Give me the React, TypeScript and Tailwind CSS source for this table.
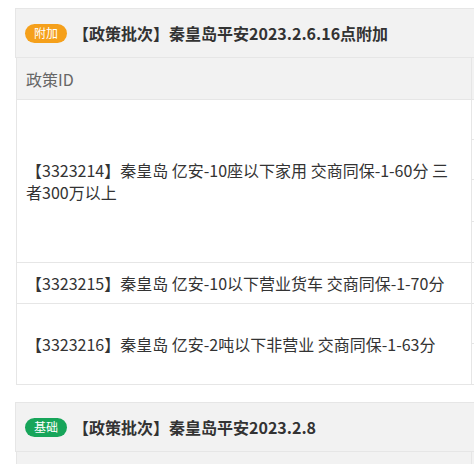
const batches = [
  {
    tag: "附加",
    tagClass: "bg-[#f5a01b]",
    title: "【政策批次】秦皇岛平安2023.2.6.16点附加",
    rows: [
      { text: "【3323214】秦皇岛 亿安-10座以下家用 交商同保-1-60分 三者300万以上", subs: [40, 40, 42, 40] },
      { text: "【3323215】秦皇岛 亿安-10以下营业货车 交商同保-1-70分", subs: [40] },
      { text: "【3323216】秦皇岛 亿安-2吨以下非营业 交商同保-1-63分", subs: [40, 40] },
    ],
  },
  {
    tag: "基础",
    tagClass: "bg-[#17a55a]",
    title: "【政策批次】秦皇岛平安2023.2.8",
    rows: [{ text: "【3323201】秦皇岛 平安-6座以下家用 交商同保-1-60分", subs: [40, 40] }],
  },
];

type Batch = (typeof batches)[number];

const BatchCard = ({ batch }: { batch: Batch }) => (
  <div className="w-[760px]">
    <div className="flex h-[50px] items-center border border-[#e6e6e6] bg-[#f2f2f2] pl-[9px]">
      <span
        className={`flex h-[19px] w-[42px] items-center justify-center rounded-full text-[12px] leading-none text-white ${batch.tagClass}`}
      >
        {batch.tag}
      </span>
      <span className="ml-[6px] text-[16px] font-bold text-[#333]">{batch.title}</span>
    </div>
    <div className="ml-px border-b border-l border-[#e6e6e6]">
      <div className="flex h-[42px] border-b border-[#e6e6e6] bg-[#f2f2f2]">
        <div className="flex w-[455px] items-center border-r border-[#e6e6e6] px-[9px] text-[16px] text-[#666]">
          政策ID
        </div>
        <div className="flex-1" />
      </div>
      {batch.rows.map((row, i) => (
        <div
          key={i}
          className={`flex ${i < batch.rows.length - 1 ? "border-b border-[#e6e6e6]" : ""}`}
        >
          <div className="flex w-[455px] items-center border-r border-[#e6e6e6] px-[9px] text-[16px] leading-[22px] text-[#333]">
            {row.text}
          </div>
          <div className="flex flex-1 flex-col">
            {row.subs.map((h, j) => (
              <div
                key={j}
                className={j < row.subs.length - 1 ? "border-b border-[#e6e6e6]" : ""}
                style={{ height: h }}
              />
            ))}
          </div>
        </div>
      ))}
    </div>
  </div>
);

export default function App() {
  return (
    <div className="h-[464px] w-[474px] overflow-hidden bg-white pl-[15px] pt-2 font-['Noto_Sans_CJK_SC','Microsoft_YaHei',sans-serif]">
      <div className="flex flex-col gap-[17px]">
        {batches.map((b, i) => (
          <BatchCard key={i} batch={b} />
        ))}
      </div>
    </div>
  );
}
